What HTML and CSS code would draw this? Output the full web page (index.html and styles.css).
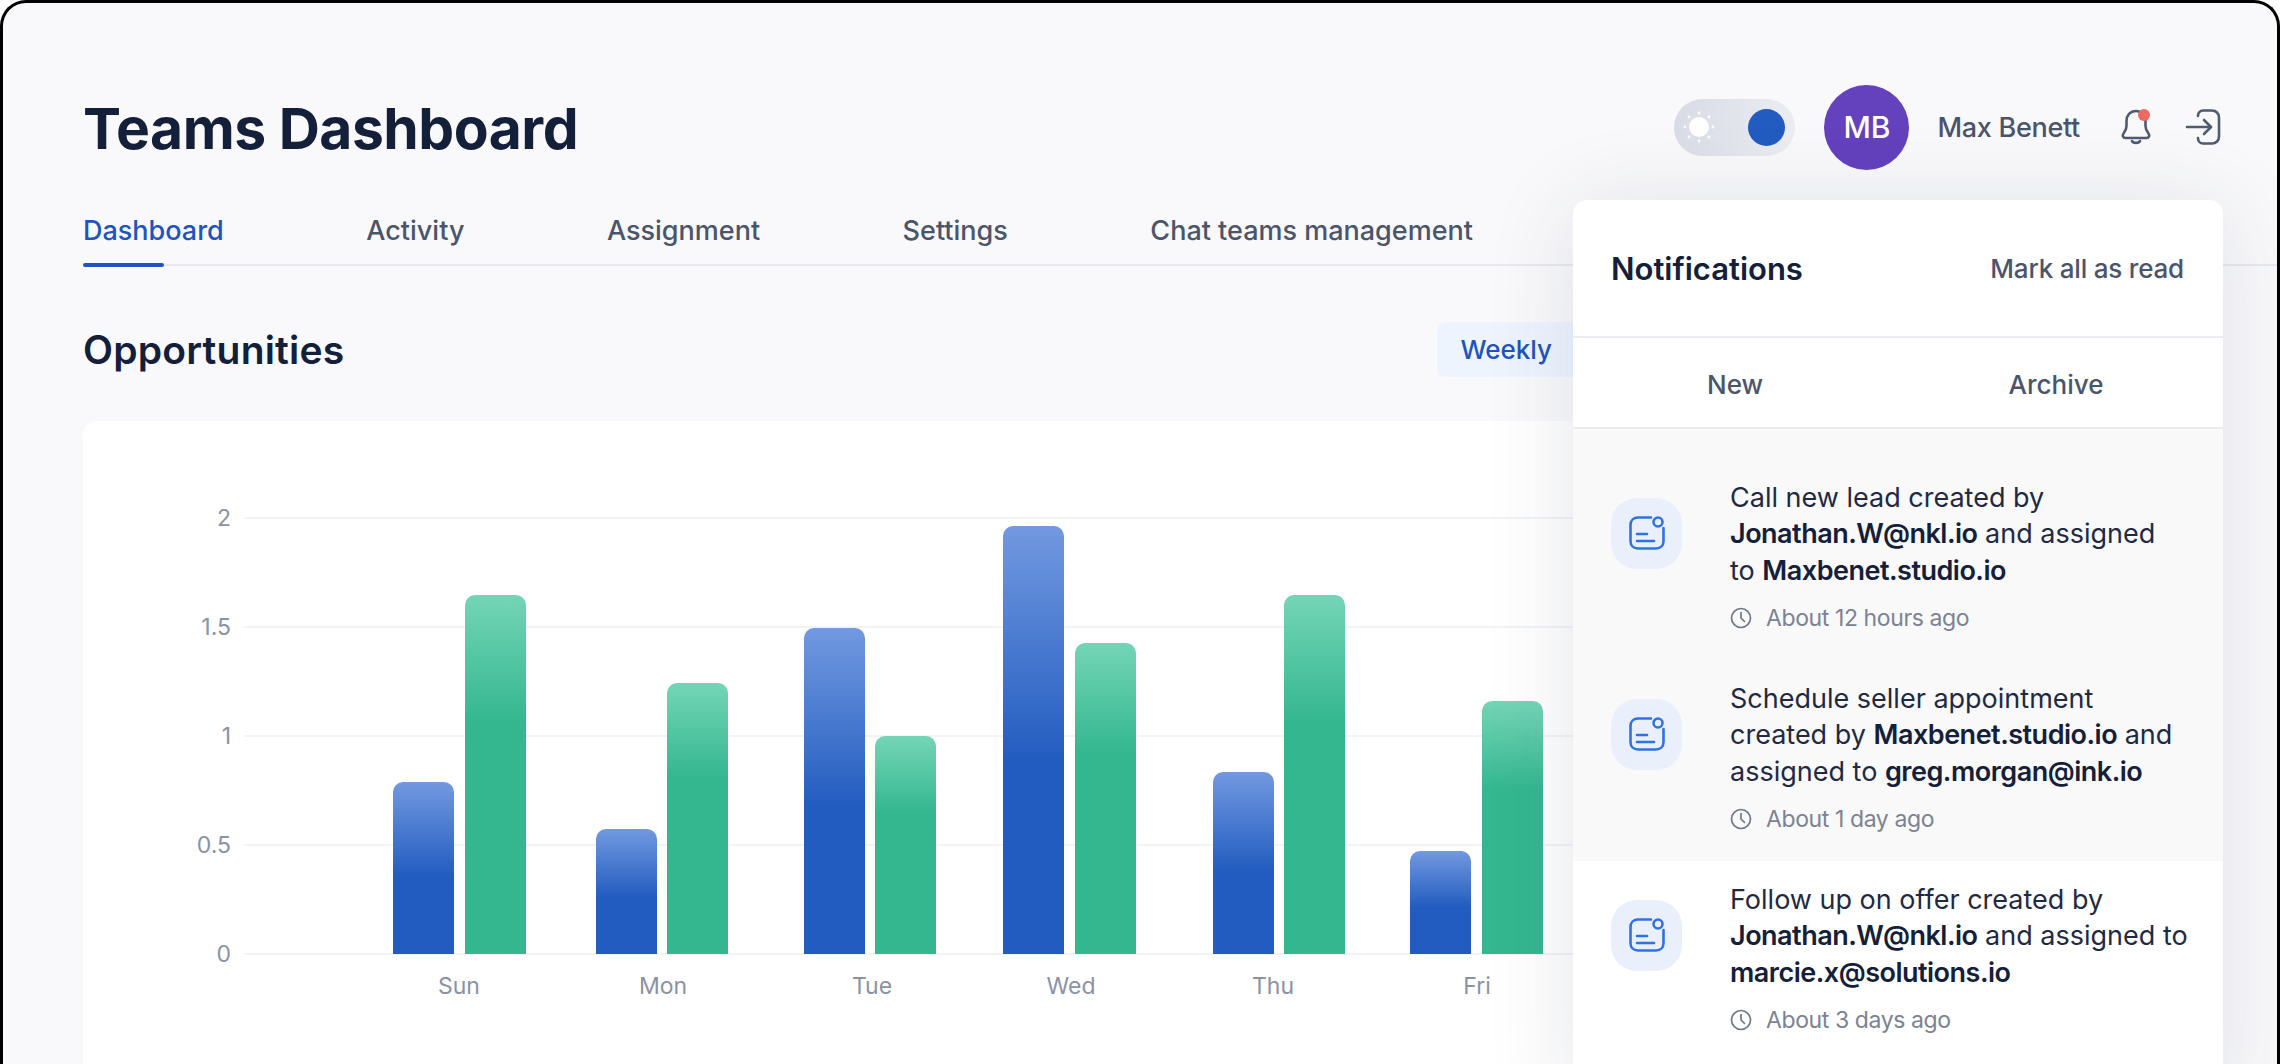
FILE: index.html
```html
<!DOCTYPE html>
<html>

<head>
  <meta name="viewport" content="width=device-width, initial-scale=1.0">
  <title>Teams Dashboard</title>
  <link rel="stylesheet" href="styles.css">
</head>

<body>
  <div class="frame">
    <header class="topbar">
      <h1>Teams Dashboard</h1>
      <div class="userBox">
        <div class="themeToggle">
          <svg class="sunIcon" viewBox="0 0 32 32" width="32" height="32">
            <circle cx="16" cy="16" r="10" fill="#fff" />
            <g fill="#fff">
              <circle cx="16" cy="2" r="1.4" />
              <circle cx="16" cy="30" r="1.4" />
              <circle cx="2" cy="16" r="1.4" />
              <circle cx="30" cy="16" r="1.4" />
              <circle cx="6" cy="6" r="1.4" />
              <circle cx="26" cy="6" r="1.4" />
              <circle cx="6" cy="26" r="1.4" />
              <circle cx="26" cy="26" r="1.4" />
            </g>
          </svg>
          <span class="toggleKnob"></span>
        </div>
        <div class="avatar">MB</div>
        <span class="userName">Max Benett</span>
        <svg class="bellIcon" viewBox="0 0 34 38" width="34" height="38" fill="none" stroke="#4f5b72" stroke-width="2.6" stroke-linecap="round" stroke-linejoin="round">
          <path d="M17 3c-6 0-9.500 4.500-9.500 10v5c0 3-1 5-3 7.500-1.500 2-.5 4.500 2 4.500h21c2.500 0 3.500-2.500 2-4.500-2-2.500-3-4.500-3-7.500v-5c0-5.500-3.500-10-9.500-10z" />
          <path d="M13 33c1 2.500 7 2.500 8 0" />
          <circle cx="25" cy="7" r="6" fill="#ec6a5e" stroke="none" />
        </svg>
        <svg class="exitIcon" viewBox="0 0 36 36" width="36" height="36" fill="none" stroke="#4f5b72" stroke-width="2.6" stroke-linecap="round" stroke-linejoin="round">
          <path d="M13 7V6.500C13 3.500 15.500 1.500 18 1.500h9c4 0 7 3 7 7v19c0 4-3 7-7 7h-9c-2.500 0-5-2-5-5V29" />
          <path d="M2 18h24" />
          <path d="M19 11l7 7-7 7" />
        </svg>
      </div>
    </header>

    <nav class="tabs">
      <a class="tab active" href="#">Dashboard</a>
      <a class="tab" href="#">Activity</a>
      <a class="tab" href="#">Assignment</a>
      <a class="tab" href="#">Settings</a>
      <a class="tab" href="#">Chat teams management</a>
    </nav>

    <div class="sectionHead">
      <h2>Opportunities</h2>
      <span class="rangePill">Weekly</span>
    </div>

    <section class="chartCard">
      <svg class="chart" viewBox="0 0 1500 643" width="1500" height="643">
        <defs>
          <linearGradient id="blueBar" x1="0" y1="0" x2="0" y2="1">
            <stop offset="0" stop-color="#7299e0" />
            <stop offset="0.55" stop-color="#225cc0" />
            <stop offset="1" stop-color="#225cc0" />
          </linearGradient>
          <linearGradient id="greenBar" x1="0" y1="0" x2="0" y2="1">
            <stop offset="0" stop-color="#74d5b6" />
            <stop offset="0.35" stop-color="#34b78f" />
            <stop offset="1" stop-color="#34b78f" />
          </linearGradient>
        </defs>
        <g class="gridLines">
          <line x1="161" x2="1500" y1="97" y2="97" />
          <line x1="161" x2="1500" y1="206" y2="206" />
          <line x1="161" x2="1500" y1="315" y2="315" />
          <line x1="161" x2="1500" y1="424" y2="424" />
          <line x1="161" x2="1500" y1="533" y2="533" />
        </g>
        <g class="axisText" text-anchor="end">
          <text x="148" y="105">2</text>
          <text x="148" y="214">1.5</text>
          <text x="148" y="323">1</text>
          <text x="148" y="432">0.5</text>
          <text x="148" y="541">0</text>
        </g>
        <g class="axisText" text-anchor="middle">
          <text x="376" y="573">Sun</text>
          <text x="580" y="573">Mon</text>
          <text x="789" y="573">Tue</text>
          <text x="988" y="573">Wed</text>
          <text x="1190" y="573">Thu</text>
          <text x="1394" y="573">Fri</text>
        </g>
        <path fill="url(#blueBar)" d="M310 533V371a10 10 0 0 1 10-10h41a10 10 0 0 1 10 10V533z" />
        <path fill="url(#greenBar)" d="M382 533V184a10 10 0 0 1 10-10h41a10 10 0 0 1 10 10V533z" />
        <path fill="url(#blueBar)" d="M513 533V418a10 10 0 0 1 10-10h41a10 10 0 0 1 10 10V533z" />
        <path fill="url(#greenBar)" d="M584 533V272a10 10 0 0 1 10-10h41a10 10 0 0 1 10 10V533z" />
        <path fill="url(#blueBar)" d="M721 533V217a10 10 0 0 1 10-10h41a10 10 0 0 1 10 10V533z" />
        <path fill="url(#greenBar)" d="M792 533V325a10 10 0 0 1 10-10h41a10 10 0 0 1 10 10V533z" />
        <path fill="url(#blueBar)" d="M920 533V115a10 10 0 0 1 10-10h41a10 10 0 0 1 10 10V533z" />
        <path fill="url(#greenBar)" d="M992 533V232a10 10 0 0 1 10-10h41a10 10 0 0 1 10 10V533z" />
        <path fill="url(#blueBar)" d="M1130 533V361a10 10 0 0 1 10-10h41a10 10 0 0 1 10 10V533z" />
        <path fill="url(#greenBar)" d="M1201 533V184a10 10 0 0 1 10-10h41a10 10 0 0 1 10 10V533z" />
        <path fill="url(#blueBar)" d="M1327 533V440a10 10 0 0 1 10-10h41a10 10 0 0 1 10 10V533z" />
        <path fill="url(#greenBar)" d="M1399 533V290a10 10 0 0 1 10-10h41a10 10 0 0 1 10 10V533z" />
      </svg>
    </section>

    <aside class="notifPanel">
      <div class="notifHead">
        <h3>Notifications</h3>
        <span class="markRead">Mark all as read</span>
      </div>
      <div class="notifTabs">
        <span>New</span>
        <span>Archive</span>
      </div>
      <div class="notifUnread">
        <div class="notifItem">
          <div class="notifIcon">
            <svg viewBox="0 0 36 36" width="36" height="36" fill="none" stroke="#2f72e6" stroke-width="2.6" stroke-linecap="round" stroke-linejoin="round">
              <path d="M22 1.500H9C4.500 1.500 1.500 4.500 1.500 9v16c0 4.500 3 7.500 7.500 7.500h18c4.500 0 7.500-3 7.500-7.500V12" />
              <circle cx="29" cy="6" r="4.500" />
              <path d="M8 18h10" />
              <path d="M8 25h17" />
            </svg>
          </div>
          <div class="notifBody">
            <p>Call new lead created by<br><b>Jonathan.W@nkl.io</b> and assigned<br>to <b>Maxbenet.studio.io</b></p>
            <div class="notifTime">
              <svg viewBox="0 0 22 22" width="22" height="22" fill="none" stroke="#6f7889" stroke-width="1.7" stroke-linecap="round" stroke-linejoin="round">
                <circle cx="11" cy="11" r="9.500" />
                <path d="M11 5.500V11l3.500 3.500" />
              </svg>
              <span>About 12 hours ago</span>
            </div>
          </div>
        </div>
        <div class="notifItem">
          <div class="notifIcon">
            <svg viewBox="0 0 36 36" width="36" height="36" fill="none" stroke="#2f72e6" stroke-width="2.6" stroke-linecap="round" stroke-linejoin="round">
              <path d="M22 1.500H9C4.500 1.500 1.500 4.500 1.500 9v16c0 4.500 3 7.500 7.500 7.500h18c4.500 0 7.500-3 7.500-7.500V12" />
              <circle cx="29" cy="6" r="4.500" />
              <path d="M8 18h10" />
              <path d="M8 25h17" />
            </svg>
          </div>
          <div class="notifBody">
            <p>Schedule seller appointment<br>created by <b>Maxbenet.studio.io</b> and<br>assigned to <b>greg.morgan@ink.io</b></p>
            <div class="notifTime">
              <svg viewBox="0 0 22 22" width="22" height="22" fill="none" stroke="#6f7889" stroke-width="1.7" stroke-linecap="round" stroke-linejoin="round">
                <circle cx="11" cy="11" r="9.500" />
                <path d="M11 5.500V11l3.500 3.500" />
              </svg>
              <span>About 1 day ago</span>
            </div>
          </div>
        </div>
      </div>
      <div class="notifItem">
        <div class="notifIcon">
          <svg viewBox="0 0 36 36" width="36" height="36" fill="none" stroke="#2f72e6" stroke-width="2.6" stroke-linecap="round" stroke-linejoin="round">
            <path d="M22 1.500H9C4.500 1.500 1.500 4.500 1.500 9v16c0 4.500 3 7.500 7.500 7.500h18c4.500 0 7.500-3 7.500-7.500V12" />
            <circle cx="29" cy="6" r="4.500" />
            <path d="M8 18h10" />
            <path d="M8 25h17" />
          </svg>
        </div>
        <div class="notifBody">
          <p>Follow up on offer created by<br><b>Jonathan.W@nkl.io</b> and assigned to<br><b>marcie.x@solutions.io</b></p>
          <div class="notifTime">
            <svg viewBox="0 0 22 22" width="22" height="22" fill="none" stroke="#6f7889" stroke-width="1.7" stroke-linecap="round" stroke-linejoin="round">
              <circle cx="11" cy="11" r="9.500" />
              <path d="M11 5.500V11l3.500 3.500" />
            </svg>
            <span>About 3 days ago</span>
          </div>
        </div>
      </div>
    </aside>
  </div>
</body>

</html>
```

FILE: styles.css
```css
html,
body {
  height: 100%;
  margin: 0;
  padding: 0;
  overflow: hidden;
  background-color: #fff;
}

body {
  font-family: "Inter", "Noto Sans", sans-serif;
  color: #141f38;
}

.frame {
  position: relative;
  height: 1064px;
  box-sizing: border-box;
  padding: 0 0 0 80px;
  border: 3px solid #000;
  border-bottom: none;
  border-radius: 26px 26px 0 0;
  background-color: #f9f9fb;
  overflow: hidden;
}

.topbar {
  display: flex;
  align-items: center;
  justify-content: space-between;
  height: 167px;
  padding: 81px 56px 0 0;
  box-sizing: border-box;
}

.topbar h1 {
  margin: 2px 0 0;
  font-size: 57px;
  font-weight: 700;
  letter-spacing: -0.5px;
  color: #14203a;
}

.userBox {
  display: flex;
  align-items: center;
}

.themeToggle {
  display: flex;
  align-items: center;
  justify-content: space-between;
  width: 121px;
  height: 57px;
  padding: 0 10px 0 9px;
  box-sizing: border-box;
  border-radius: 29px;
  background: linear-gradient(100deg, #d8dbe5, #eceef3);
}

.toggleKnob {
  width: 37px;
  height: 37px;
  border-radius: 50%;
  background-color: #225cc0;
}

.avatar {
  display: flex;
  align-items: center;
  justify-content: center;
  width: 85px;
  height: 85px;
  margin-left: 29px;
  border-radius: 50%;
  background-color: #6441bd;
  color: #fff;
  font-size: 30px;
  font-weight: 500;
}

.userName {
  margin-left: 28px;
  font-size: 27px;
  font-weight: 500;
  letter-spacing: -0.3px;
  color: #4a556c;
}

.bellIcon {
  margin-left: 39px;
}

.exitIcon {
  margin-left: 32px;
}

.tabs {
  display: flex;
  gap: 142.5px;
  height: 37px;
  margin-top: 42px;
  padding-bottom: 15px;
  border-bottom: 2px solid #e8e9ee;
}

.tab {
  position: relative;
  height: 37px;
  font-size: 27px;
  font-weight: 500;
  line-height: 37px;
  color: #4a556c;
  text-decoration: none;
}

.tab.active {
  color: #1d55bd;
}

.tab.active::after {
  content: "";
  position: absolute;
  left: 0;
  bottom: -18px;
  width: 81px;
  height: 4px;
  border-radius: 2px;
  background-color: #1d55bd;
}

.sectionHead {
  display: flex;
  align-items: center;
  justify-content: space-between;
  height: 55px;
  margin-top: 56px;
}

.sectionHead h2 {
  margin: 0;
  font-size: 39px;
  font-weight: 600;
  letter-spacing: 0.2px;
  color: #14203a;
}

.rangePill {
  display: flex;
  align-items: center;
  height: 55px;
  padding: 0 40px 0 23px;
  margin-right: 685px;
  border-radius: 8px;
  background-color: #eef4fe;
  color: #1d55bd;
  font-size: 26px;
  font-weight: 500;
}

.chartCard {
  height: 700px;
  margin-top: 44px;
  margin-right: 80px;
  border-radius: 14px;
  background-color: #fff;
}

.chart {
  display: block;
}

.gridLines line {
  stroke: #f2f3f5;
  stroke-width: 2;
}

.axisText text {
  font-size: 23px;
  fill: #8a92a4;
}

.notifPanel {
  position: absolute;
  top: 197px;
  left: 1570px;
  width: 650px;
  height: 900px;
  border-radius: 14px;
  background-color: #fff;
  box-shadow: 0 8px 90px rgba(40, 50, 90, 0.12);
}

.notifHead {
  display: flex;
  align-items: center;
  justify-content: space-between;
  height: 138px;
  padding: 0 39px 0 38px;
  box-sizing: border-box;
  border-bottom: 2px solid #ececf0;
}

.notifHead h3 {
  margin: 0;
  font-size: 31px;
  font-weight: 600;
  color: #14203a;
}

.markRead {
  font-size: 26px;
  font-weight: 500;
  letter-spacing: -0.2px;
  color: #4a556c;
}

.notifTabs {
  display: grid;
  grid-template-columns: 324px 318px;
  align-items: center;
  height: 91px;
  padding-top: 3px;
  box-sizing: border-box;
  border-bottom: 2px solid #ececf0;
  font-size: 26px;
  font-weight: 500;
  color: #4a556c;
  text-align: center;
}

.notifUnread {
  padding-top: 30px;
  background-color: #f9f9fa;
}

.notifItem {
  display: flex;
  gap: 48px;
  height: 201px;
  padding: 21px 20px 0 38px;
  box-sizing: border-box;
}

.notifIcon {
  display: flex;
  flex: none;
  align-items: center;
  justify-content: center;
  width: 71px;
  height: 71px;
  margin-top: 18px;
  border-radius: 26px;
  background-color: #e9f0fb;
}

.notifBody p {
  margin: 0;
  font-size: 27px;
  line-height: 36.4px;
  white-space: nowrap;
  color: #1f2a42;
}

.notifBody b {
  font-weight: 600;
  letter-spacing: -0.5px;
  color: #14203a;
}

.notifTime {
  display: flex;
  align-items: center;
  gap: 14px;
  margin-top: 15px;
  font-size: 23px;
  letter-spacing: -0.4px;
  color: #7a8394;
}
```
